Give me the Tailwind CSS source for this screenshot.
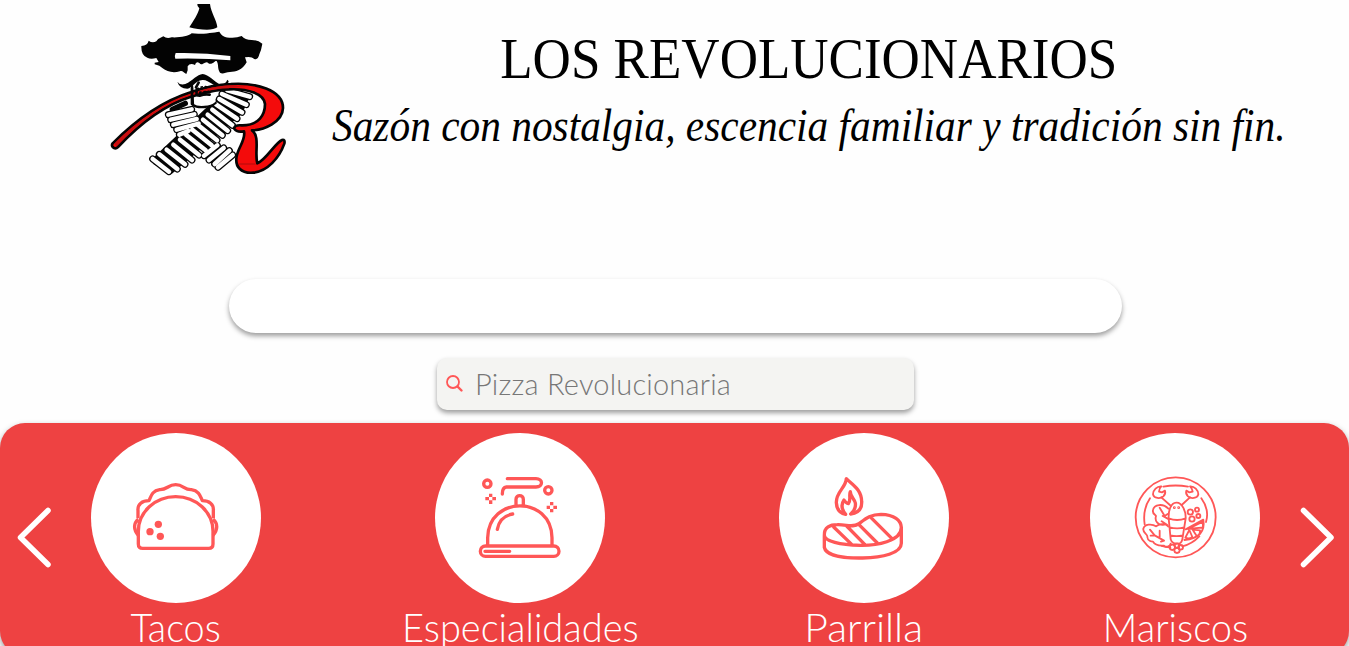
<!DOCTYPE html>
<html lang="es">
<head>
<meta charset="utf-8">
<title>Los Revolucionarios</title>
<script src="https://cdn.jsdelivr.net/npm/@tailwindcss/browser@4"></script>
</head>
<body class="h-[646px] overflow-hidden bg-[#fefefe] text-black">
<header class="flex h-[279px] items-start pl-[100px]">
  <svg class="h-[180px] w-[200px] shrink-0" viewBox="0 0 600 540" fill="none" stroke-linecap="round" stroke-linejoin="round">
    <g fill="#030303">
      <path d="M292 12H330C333 38 350 60 352 82C338 94 295 89 268 82C281 62 294 42 298 25Q291 20 292 12Z"/>
      <path d="M124 138Q143 136 146 122Q157 130 169 124Q175 115 190 109Q200 117 215 112C240 113 265 109 275 100C300 104 338 98 358 95C366 107 371 113 397 113Q412 113 425 108Q435 120 455 120Q475 120 487 131Q484 150 478 163Q474 181 463 177Q454 168 435 172L440 187C428 210 406 216 390 216C376 216 369 224 360 218C351 205 357 194 350 183C342 182 341 193 327 191Q322 182 309 191Q303 196 298 189Q288 183 285 195Q270 188 263 199V211L259 222C250 218 247 210 240 214C219 220 200 215 188 205Q180 196 164 193V188L176 186L169 174Q152 179 142 173Q123 166 124 138Z"/>
      <path d="M232 245Q240 257 256 252C279 242 291 223 308 222C326 224 342 244 361 254Q377 253 382 239L386 244Q382 264 363 263C344 263 326 238 307 240C286 242 278 264 262 266Q238 265 232 245Z"/>
    </g>
    <path fill="#fefefe" d="M227 159Q310 157 391 168V181Q310 174 226 176Q223 166 227 159Z"/>
    <g transform="translate(0 240)">
      <path stroke="#050505" stroke-width="16" d="M217 88L256 70"/><path stroke="#050505" stroke-width="24" d="M249 163L303 144M275 128L320 210M210 105L250 158"/>
      <path fill="#050505" d="M158 235L365 40L448 55L425 103L215 282L160 252ZM205 103L275 87L320 160L250 165ZM308 223L350 192L405 222L350 267Z"/>
      <path stroke="#050505" stroke-width="21" d="M158 237L207 275M178 223L232 267M200 209L255 253M220 194L276 240M240 179L297 225M258 164L317 211M277 149L335 196M293 134L351 181M309 119L367 166M323 104L383 152M337 89L397 136M348 73L411 116M358 57L426 97M366 42L439 74M382 31L449 50M205 104L275 88M212 119L283 103M220 134L290 117M230 149L296 131M238 164L265 153M312 227L352 196M327 240L371 204M344 252L388 212M354 262L398 225"/>
      <path stroke="#fefefe" stroke-width="13.500" d="M158 237L207 275M178 223L232 267M200 209L255 253M220 194L276 240M240 179L297 225M258 164L317 211M277 149L335 196M293 134L351 181M309 119L367 166M323 104L383 152M337 89L397 136M348 73L411 116M358 57L426 97M366 42L439 74M382 31L449 50M205 104L275 88M212 119L283 103M220 134L290 117M230 149L296 131M238 164L265 153M312 227L352 196M327 240L371 204M344 252L388 212M354 262L398 225"/>
      <path fill="#fefefe" stroke="#050505" stroke-width="7" d="M276 18L279 75Q290 83 313 81Q336 79 347 69"/>
      <path fill="#fefefe" d="M281 25Q290 5 310 5Q331 7 344 24L347 65Q315 83 284 70Z"/>
      <path fill="#f40b0b" stroke="#050505" stroke-width="8" d="M38 190C105 123 185 64 272 37C314 22 350 13 392 12C466 7 549 29 549 84C548 126 492 150 456 151C481 169 463 219 472 250C500 238 524 190 546 180Q556 178 553 191C538 233 503 274 460 278C423 281 404 260 410 229C415 201 438 179 432 154Q410 158 402 145Q405 134 425 136C478 137 495 103 495 72C492 42 444 25 387 28C339 28 301 43 273 50C192 75 113 138 54 201Q46 209 38 201Q34 196 38 190Z"/>
      <path fill="#bd1012" opacity=".8" d="M42 191C110 124 189 69 274 41C311 28 350 18 392 16L438 19L377 25C330 28 302 38 273 46C190 70 111 134 50 199Z"/>
      <path stroke="#050505" stroke-width="8" d="M276 25V72M291 28Q285 48 299 47Q314 42 329 44M288 22L296 8"/>
      <path stroke="#050505" stroke-width="5" stroke-dasharray="4 9" d="M291 27Q310 15 326 23M299 37L325 34"/>
      <path stroke="#b00d0d" stroke-width="3" d="M418 252H466"/>
    </g>
  </svg>
  <div class="ml-[9px] flex w-[1000px] shrink-0 flex-col items-center pt-[26px] font-['Liberation_Serif',serif]">
    <h1 class="scale-x-[.93] text-[57px] leading-[66px] whitespace-nowrap">LOS REVOLUCIONARIOS</h1>
    <p class="scale-x-[.88] text-[47px] leading-[66px] whitespace-nowrap italic">Sazón con nostalgia, escencia familiar y tradición sin fin.</p>
  </div>
</header>
<main class="font-[Lato,sans-serif] font-light">
  <div class="ml-[229px] h-[54px] w-[893px] rounded-full bg-white shadow-[0_3px_5px_rgba(0,0,0,.38)]"></div>
  <label class="mt-[25px] ml-[437px] flex h-[52px] w-[477px] items-center rounded-[10px] bg-[#f4f4f2] shadow-[0_3px_5px_rgba(0,0,0,.38)]">
    <svg class="ml-[8px] size-[20px]" viewBox="0 0 20 20" fill="none" stroke="#ff5757" stroke-linecap="round"><circle cx="8" cy="8" r="6" stroke-width="1.8"/><path d="M12.5 12.5L16.5 16.5" stroke-width="2.4"/></svg>
    <span class="ml-[10px] text-[29px] tracking-[.2px] whitespace-nowrap text-[#777]">Pizza Revolucionaria</span>
  </label>
  <section class="relative mt-[13px] flex h-[233px] rounded-[25px] bg-[#ee4242] pt-[10px] pl-[4px] text-[39px] leading-[48px] text-white shadow-[0_3px_6px_rgba(0,0,0,.4)]">
    <article class="flex w-[344px] flex-col items-center">
      <div class="flex size-[170px] shrink-0 items-center justify-center rounded-full bg-white">
        <svg class="mr-[2px] mb-[6px] h-[90px] w-[110px]" viewBox="0 0 330 270" fill="none" stroke="#ff5757" stroke-width="10" stroke-linejoin="round"><path d="M55 184A111 103 0 0 1 279 184V222Q279 235 266 235H68Q55 235 55 222Z"/><path d="M54 145V122C52 102 67 92 87 92C93 79 96 62 119 59C142 60 143 44 167 44S192 60 214 59C238 62 241 79 247 92C267 92 282 102 280 122V145M55 148C40 160 40 179 55 196M279 148C294 160 294 179 279 196"/><g fill="#ff5757" stroke="none"><circle cx="115" cy="163" r="11"/><circle cx="90" cy="185" r="11"/><circle cx="121" cy="199" r="11"/></g></svg>
      </div><h2 class="scale-x-[.97]">Tacos</h2>
    </article>
    <article class="flex w-[344px] flex-col items-center">
      <div class="flex size-[170px] shrink-0 items-center justify-center rounded-full bg-white">
        <svg class="mb-px h-[105px] w-[110px]" viewBox="0 0 330 315" fill="none" stroke="#ff5757" stroke-width="10" stroke-linecap="round"><path d="M68 240V218C71 91 259 91 261 218V240M97 193Q104 154 143 147M153 121V103C153 88 175 88 175 103V121M60 259H134M127 41H213C235 41 235 66 213 66H124Q112 67 112 87"/><rect x="46" y="243" width="236" height="31" rx="15.5"/><circle cx="67" cy="56" r="11"/><circle cx="250" cy="76" r="11"/><path stroke-linecap="butt" d="M77 86V96M77 106V117M61 101H72M82 101H93M260 111V121M260 132V142M245 127H255M265 127H276"/></svg>
      </div><h2 class="scale-x-[.975]">Especialidades</h2>
    </article>
    <article class="flex w-[344px] flex-col items-center">
      <div class="flex size-[170px] shrink-0 items-center justify-center rounded-full bg-white">
        <svg class="mb-px ml-[2px] h-[105px] w-[110px]" viewBox="0 0 330 315" fill="none" stroke="#ff5757" stroke-width="10" stroke-linecap="round" stroke-linejoin="round"><path d="M43 211C42 186 61 179 82 179C110 178 128 190 147 176C168 160 182 148 213 148C253 149 273 166 274 187C275 229 198 242 150 241C90 240 44 229 43 211ZM43 212V247C48 273 105 280 158 279C217 278 274 265 274 235V188M71 186L125 238M110 183L164 238M147 179L202 234M180 155L246 221"/><path d="M109 41C108 68 78 80 79 113C80 135 91 145 107 148C92 130 95 115 102 105Q108 115 115 116C124 105 116 90 121 80C121 96 134 102 136 114C138 128 132 139 122 147C145 144 156 130 155 110C155 73 126 58 109 41Z"/></svg>
      </div><h2 class="scale-x-[1.05]">Parrilla</h2>
    </article>
    <article class="flex w-[278px] flex-col items-center">
      <div class="flex size-[170px] shrink-0 items-center justify-center rounded-full bg-white">
        <svg class="mb-px h-[105px] w-[110px]" viewBox="0 0 330 315" fill="none" stroke="#ff5757" stroke-width="5.5" stroke-linecap="round" stroke-linejoin="round"><circle cx="167" cy="157" r="120"/><path d="M130 65Q167 58 204 65M90 100C75 122 70 151 74 178M244 100C260 122 265 148 258 171M187 244Q216 237 238 214M125 243Q140 248 151 247M124 97L153 123M210 97L185 120"/><path d="M124 64C111 63 99 75 99 88C102 101 121 102 130 94Q138 86 135 77L126 82L117 80Q117 70 124 64ZM210 64C223 63 235 75 235 88C232 101 213 102 204 94Q196 86 199 77L208 82L218 80Q217 70 210 64Z"/><path d="M146 160C145 139 151 114 169 113S198 140 197 160L187 223Q184 237 172 236Q157 238 152 223ZM146 160Q171 170 197 160M148 187Q172 193 193 187M151 211Q170 216 188 211"/><circle cx="163" cy="128" r="1.5"/><circle cx="176" cy="128" r="1.5"/><circle cx="157" cy="247" r="8"/><circle cx="171" cy="242" r="7"/><circle cx="182" cy="247" r="7"/><circle cx="171" cy="256" r="8"/><path d="M145 131C130 115 102 117 99 135C96 147 107 149 108 153C103 168 115 182 132 179M119 128L134 153L143 147M144 184C137 172 115 178 108 184C97 176 72 176 70 192C68 204 84 207 82 216C83 229 97 230 99 230C107 245 124 241 132 242C141 249 151 243 152 236M90 194L104 211L132 227M104 211L92 212M119 219L119 197M132 227L123 230M143 161L128 153M141 179L125 169"/><circle cx="211" cy="141" r="8"/><circle cx="231" cy="134" r="6"/><circle cx="216" cy="162" r="8"/><circle cx="235" cy="153" r="6"/><path d="M197 193L250 164Q259 218 193 225M204 192L247 171Q252 190 244 188ZM208 195L196 218Q207 224 217 216ZM218 194L240 196Q241 209 230 213Z"/></svg>
      </div><h2 class="scale-x-[.975]">Mariscos</h2>
    </article>
    <svg class="absolute top-[84px] left-[16px] h-[62px] w-[36px]" viewBox="0 0 36 62" fill="none" stroke="#fff" stroke-width="5.5" stroke-linecap="round" stroke-linejoin="round"><path d="M32 3.5L4.5 30.5L32 57.5"/></svg>
    <svg class="absolute top-[84px] left-[1299px] h-[62px] w-[36px]" viewBox="0 0 36 62" fill="none" stroke="#fff" stroke-width="5.5" stroke-linecap="round" stroke-linejoin="round"><path d="M4.500 3.5L32 30.500L4.500 57.500"/></svg>
  </section>
</main>
</body>
</html>
